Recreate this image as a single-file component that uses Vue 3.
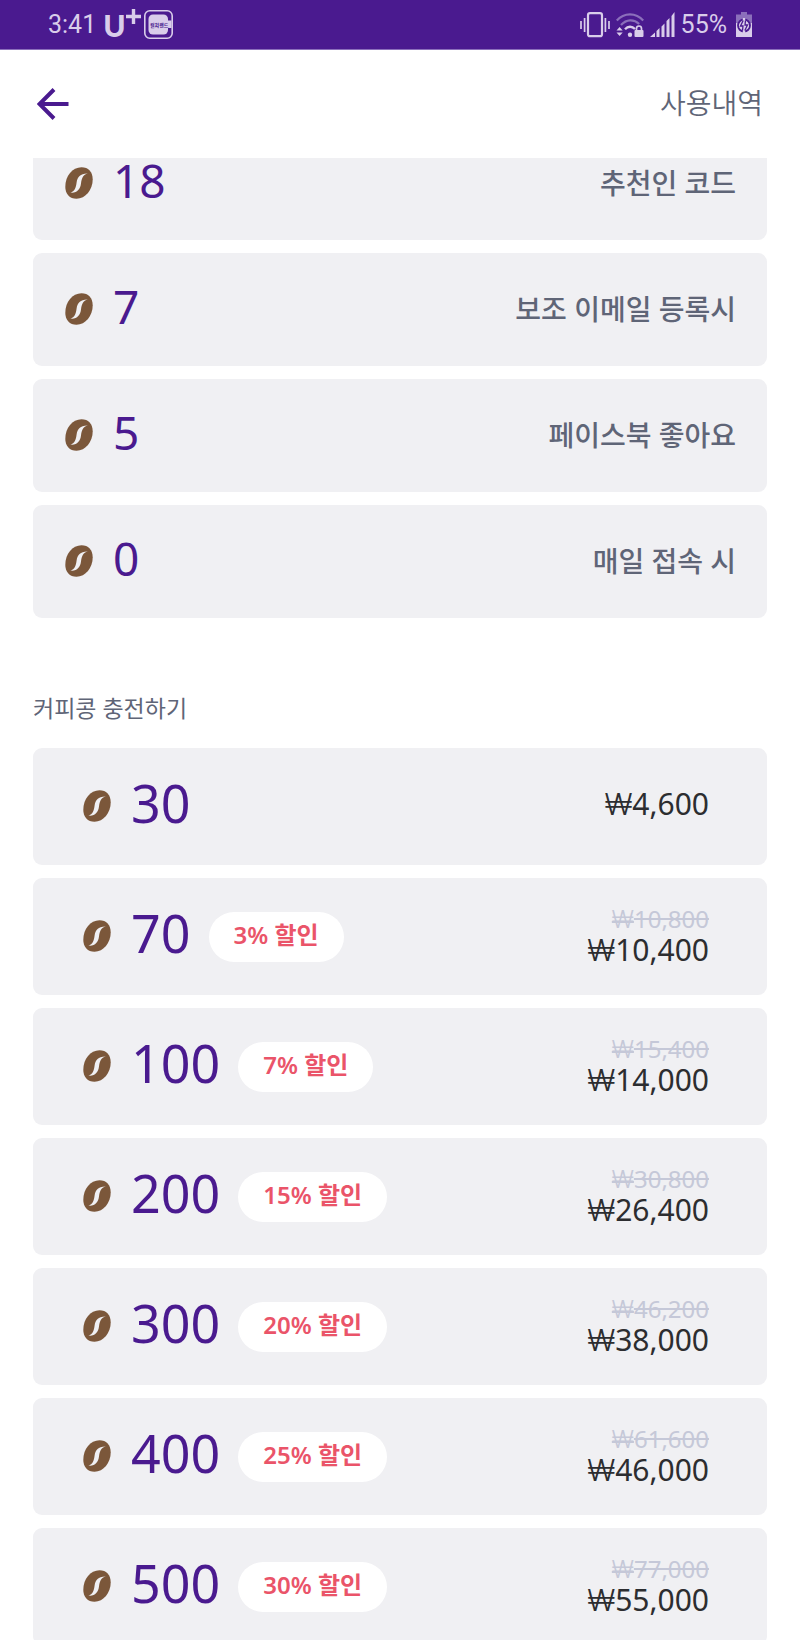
<script setup>
const rewards = [
  { amount: 18, label: '추천인 코드' },
  { amount: 7, label: '보조 이메일 등록시' },
  { amount: 5, label: '페이스북 좋아요' },
  { amount: 0, label: '매일 접속 시' },
]

const products = [
  { amount: 30, price: '4,600' },
  { amount: 70, discount: '3% 할인', was: '10,800', price: '10,400' },
  { amount: 100, discount: '7% 할인', was: '15,400', price: '14,000' },
  { amount: 200, discount: '15% 할인', was: '30,800', price: '26,400' },
  { amount: 300, discount: '20% 할인', was: '46,200', price: '38,000' },
  { amount: 400, discount: '25% 할인', was: '61,600', price: '46,000' },
  { amount: 500, discount: '30% 할인', was: '77,000', price: '55,000' },
]
</script>

<template>
  <div class="screen">
    <svg class="defs" width="0" height="0" aria-hidden="true">
      <symbol id="bean" viewBox="0 0 28 32">
        <path fill="#7b573a" d="M16.500.3C23.300.3 27.700 5 27.700 12.300C27.700 23 20.500 31.700 11.500 31.700C4.700 31.700.3 27 .3 19.700C.3 9 7.500.3 16.500.3Z" />
        <path fill="#f0f0f3" d="M22.800 6.400C15.500 6.200 12.400 9.700 11.600 15.500C11 20.500 9.800 24.400 5.300 25.500C11.500 26.500 15.300 22.500 16 16.500C16.600 11.500 18 7.300 22.800 6.400Z" />
      </symbol>
    </svg>

    <div class="status">
      <div class="status-group">
        <span class="clock">3:41</span>
        <span class="carrier">U</span>
        <svg class="plus" width="15" height="15" viewBox="0 0 15 15" aria-hidden="true">
          <path d="M7.500 0V15M0 7.500H15" stroke="#d9cdea" stroke-width="3.400" />
        </svg>
        <svg width="29" height="29" viewBox="0 0 29 29" aria-hidden="true">
          <rect x=".8" y=".8" width="27.400" height="27.400" rx="5" fill="none" stroke="#d9cdea" stroke-width="1.600" />
          <rect x="4.500" y="4.500" width="19.500" height="20" rx="4.500" fill="#d9cdea" />
          <rect x="7" y="10.500" width="20.500" height="7.500" fill="#d9cdea" />
          <text x="6" y="16.500" class="tiny">컬쳐랜드</text>
        </svg>
      </div>
      <div class="status-group right">
        <svg width="30" height="26" viewBox="0 0 30 26" fill="none" stroke="#d9cdea" aria-hidden="true">
          <rect x="8" y="1.200" width="14" height="23" rx="2" stroke-width="2.200" />
          <path d="M4.600 6V20M25.400 6V20M1 9V17M29 9V17" stroke-width="1.700" />
        </svg>
        <svg width="28" height="26" viewBox="0 0 28 26" fill="none" aria-hidden="true">
          <path d="M.8 8.500C8 .2 20 .2 27.200 8.500M5 13C10.500 7 18 7 23.200 12" stroke="#8b6fbb" stroke-width="2.200" />
          <path d="M9 17.200C12 14 16 14 19 17" stroke="#d9cdea" stroke-width="2.400" />
          <circle cx="14" cy="22.800" r="2.200" fill="#d9cdea" />
          <path d="M.5 18.500L3.600 15L6.700 18.500ZM.5 20.500L3.600 24L6.700 20.500Z" fill="#d9cdea" />
          <rect x="18.500" y="18" width="9" height="7" rx="1" fill="#d9cdea" />
          <path d="M20.500 18.500V16.500A2.500 2.500 0 0 1 25.500 16.500V18.500" stroke="#d9cdea" stroke-width="1.700" />
        </svg>
        <svg width="25" height="25" viewBox="0 0 25 25" aria-hidden="true">
          <path fill="#d9cdea" d="M0 25L5 20.500V25ZM6.500 19L9.500 16V25H6.500ZM11.500 14.500L14.500 11.500V25H11.500ZM16.500 9L19.500 6V25H16.500ZM21.500 4L24.500 0V25H21.500Z" />
        </svg>
        <span class="battery-text">55%</span>
        <svg class="battery" width="16" height="25" viewBox="0 0 16 25" aria-hidden="true">
          <path fill="#8b6fbb" d="M5 0H11V2.500H16V11H0V2.500H5Z" />
          <path fill="#d9cdea" d="M0 11H16V25H0Z" />
          <circle cx="8" cy="13.500" r="6" fill="#d9cdea" stroke="#4a1a8f" stroke-width="1.800" />
          <path d="M8 6V10M8 17V22" stroke="#d9cdea" stroke-width="2.400" />
          <path d="M7.200 8.500L4.500 14H7L6.500 18.500M9.500 8.500L9 13H11.500L8.800 18.500" fill="none" stroke="#4a1a8f" stroke-width="1.300" />
        </svg>
      </div>
    </div>

    <header class="header">
      <button type="button" class="back" aria-label="뒤로">
        <svg width="32" height="32" viewBox="0 0 32 32" fill="none" stroke="#4a1a8f" stroke-width="4" aria-hidden="true">
          <path d="M17 1.500L2.500 16L17 30.500M2.500 16H31.500" />
        </svg>
      </button>
      <a href="#history" class="history">사용내역</a>
    </header>

    <main class="content">
      <ul class="list rewards">
        <li v-for="item in rewards" :key="item.label" class="card reward">
          <svg class="bean" aria-hidden="true"><use href="#bean" /></svg>
          <span class="amount">{{ item.amount }}</span>
          <span class="label">{{ item.label }}</span>
        </li>
      </ul>

      <h2 class="title">커피콩 충전하기</h2>

      <ul class="list">
        <li v-for="item in products" :key="item.amount">
          <button type="button" class="card product">
            <svg class="bean" aria-hidden="true"><use href="#bean" /></svg>
            <span class="amount">{{ item.amount }}</span>
            <span v-if="item.discount" class="badge">{{ item.discount }}</span>
            <span class="prices">
              <s v-if="item.was" class="was"><span class="won">₩</span>{{ item.was }}</s>
              <span class="price"><span class="won">₩</span>{{ item.price }}</span>
            </span>
          </button>
        </li>
      </ul>
    </main>
  </div>
</template>

<style>
body {
  margin: 0;
  background: #fff;
}
</style>

<style scoped>
.screen {
  display: flex;
  flex-direction: column;
  height: 100vh;
  overflow: hidden;
  background: #fff;
  color: #5f6577;
  font-family: "Noto Sans", "Noto Sans CJK KR", sans-serif;
}
.defs {
  position: absolute;
}
.status {
  box-sizing: border-box;
  flex: none;
  display: flex;
  justify-content: space-between;
  height: 50px;
  padding: 0 48px;
  background: #4a1a8f;
  border-bottom: 1px solid #8b6fbb;
  color: #d9cdea;
  font-family: Roboto, sans-serif;
  font-size: 25px;
  line-height: 30px;
}
.status-group {
  display: flex;
  align-items: center;
}
.carrier {
  margin-left: 7px;
  font-family: Lato, sans-serif;
  font-size: 30px;
  font-weight: 900;
}
.plus {
  margin: 0 3px 16px 0;
}
.tiny {
  fill: #4a1a8f;
  font-family: "Noto Sans CJK KR", sans-serif;
  font-size: 5px;
  font-weight: 700;
}
.right {
  gap: 6px;
}
.battery {
  margin-left: 3px;
}
.header {
  flex: none;
  display: flex;
  align-items: center;
  justify-content: space-between;
  height: 108px;
  padding: 0 37px;
}
.back {
  display: flex;
  padding: 0;
  border: 0;
  background: none;
}
.history {
  padding-bottom: 4px;
  color: #5f6577;
  font-family: "Noto Sans CJK KR", sans-serif;
  font-size: 28px;
  font-weight: 350;
  line-height: 40px;
  text-decoration: none;
}
.content {
  flex: 1;
  min-height: 0;
  padding: 0 33px;
  overflow-y: auto;
  scrollbar-width: none;
}
.list {
  display: flex;
  flex-direction: column;
  gap: 13px;
  margin: 0;
  padding: 0;
  list-style: none;
}
.rewards {
  margin-top: -31px;
}
.card {
  box-sizing: border-box;
  display: flex;
  align-items: center;
  width: 100%;
  border: 0;
  border-radius: 9px;
  background: #f0f0f3;
  font-family: inherit;
}
.reward {
  height: 113px;
  padding: 0 31px 0 32px;
}
.product {
  height: 117px;
  padding: 0 58px 0 50px;
}
.bean {
  flex: none;
  width: 28px;
  height: 32px;
  margin: 0 20px 2px 0;
}
.amount {
  padding-bottom: 8px;
  color: #4a1a8f;
  font-size: 46px;
  line-height: 60px;
}
.product .amount {
  font-size: 52px;
}
.label {
  margin-left: auto;
  padding-bottom: 2px;
  font-size: 28px;
  font-weight: 500;
  line-height: 40px;
}
.title {
  margin: 73px 0 23px;
  font-size: 23px;
  font-weight: 400;
  line-height: 34px;
}
.badge {
  margin-left: 18px;
  padding: 0 25px 4px;
  border-radius: 25px;
  background: #fff;
  color: #ea5469;
  font-size: 24px;
  font-weight: 600;
  line-height: 46px;
}
.prices {
  display: flex;
  flex-direction: column;
  align-items: flex-end;
  margin-left: auto;
  padding-bottom: 5px;
  line-height: 30px;
}
.was {
  color: #c5c8d8;
  font-size: 24px;
}
.price {
  color: #2c2d30;
  font-size: 30px;
}
.won {
  font-family: Inter, sans-serif;
  font-weight: 300;
}
</style>
